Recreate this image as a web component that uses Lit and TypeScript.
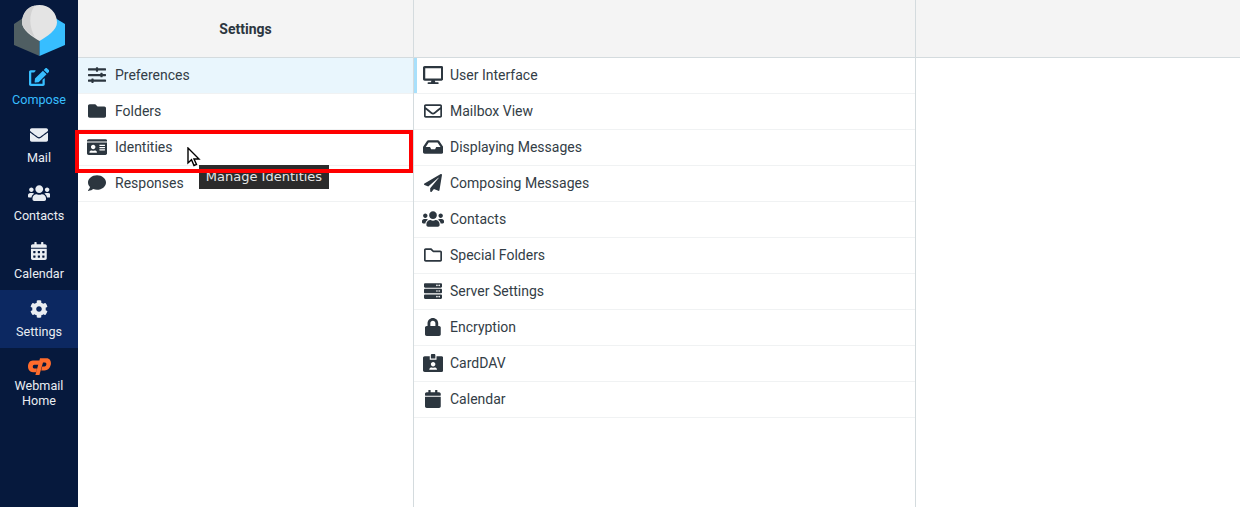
import { LitElement, html, css } from "lit";
import { customElement } from "lit/decorators.js";

type Ic = [string, string];
const I: Record<string, Ic> = {
  edit: ["0 0 576 512", "M402.6 83.2l90.2 90.2c3.8 3.8 3.8 10 0 13.8L274.4 405.6l-92.8 10.3c-12.4 1.4-22.9-9.1-21.5-21.5l10.3-92.8L388.8 83.2c3.8-3.8 10-3.8 13.8 0zm162-22.9l-48.8-48.8c-15.2-15.2-39.9-15.2-55.2 0l-35.4 35.4c-3.8 3.8-3.8 10 0 13.8l90.2 90.2c3.8 3.8 10 3.8 13.8 0l35.4-35.4c15.2-15.3 15.2-40 0-55.2zM384 346.2V448H64V128h73.1c3.2 0 6.2-1.3 8.5-3.5l40-40c7.6-7.6 2.2-20.5-8.5-20.5H48C21.5 64 0 85.5 0 112v352c0 26.5 21.5 48 48 48h352c26.5 0 48-21.5 48-48V306.2c0-10.7-12.9-16-20.5-8.5l-40 40c-2.2 2.3-3.5 5.3-3.5 8.5z"],
  envelope: ["0 0 512 512", "M502.3 190.8c3.9-3.1 9.7-.2 9.7 4.7V400c0 26.5-21.5 48-48 48H48c-26.5 0-48-21.5-48-48V195.6c0-5 5.7-7.8 9.7-4.7 22.4 17.4 52.1 39.5 154.1 113.6 21.1 15.4 56.7 47.8 92.2 47.6 35.7.3 72-32.8 92.3-47.6 102-74.1 131.6-96.3 154-113.7zM256 320c23.2.4 56.6-29.2 73.4-41.4 132.7-96.3 142.8-104.7 173.4-128.7 5.8-4.5 9.2-11.5 9.2-18.9v-19c0-26.5-21.5-48-48-48H48C21.5 64 0 85.5 0 112v19c0 7.4 3.4 14.3 9.2 18.9 30.6 23.9 40.7 32.4 173.4 128.7 16.8 12.2 50.2 41.8 73.4 41.4z"],
  users: ["0 0 640 512", "M96 224c35.3 0 64-28.7 64-64s-28.7-64-64-64-64 28.7-64 64 28.7 64 64 64zm448 0c35.3 0 64-28.7 64-64s-28.7-64-64-64-64 28.7-64 64 28.7 64 64 64zm32 32h-64c-17.6 0-33.5 7.1-45.1 18.6 40.3 22.1 68.9 62 75.1 109.4h66c17.7 0 32-14.3 32-32v-32c0-35.3-28.7-64-64-64zm-256 0c61.9 0 112-50.1 112-112S381.9 32 320 32 208 82.1 208 144s50.1 112 112 112zm76.8 32h-8.3c-20.8 10-43.9 16-68.5 16s-47.6-6-68.5-16h-8.3C179.6 288 128 339.6 128 403.2V432c0 26.5 21.5 48 48 48h288c26.5 0 48-21.5 48-48v-28.8c0-63.6-51.6-115.2-115.2-115.2zm-223.7-13.4C161.5 263.1 145.6 256 128 256H64c-35.3 0-64 28.7-64 64v32c0 17.7 14.3 32 32 32h65.9c6.3-47.4 34.9-87.3 75.2-109.4z"],
  calAlt: ["0 0 448 512", "M0 464c0 26.5 21.5 48 48 48h352c26.5 0 48-21.5 48-48V192H0v272zm320-196c0-6.6 5.4-12 12-12h40c6.6 0 12 5.4 12 12v40c0 6.6-5.4 12-12 12h-40c-6.6 0-12-5.4-12-12v-40zm0 128c0-6.6 5.4-12 12-12h40c6.6 0 12 5.4 12 12v40c0 6.6-5.4 12-12 12h-40c-6.6 0-12-5.4-12-12v-40zM192 268c0-6.6 5.4-12 12-12h40c6.6 0 12 5.4 12 12v40c0 6.6-5.4 12-12 12h-40c-6.6 0-12-5.4-12-12v-40zm0 128c0-6.6 5.4-12 12-12h40c6.6 0 12 5.4 12 12v40c0 6.6-5.4 12-12 12h-40c-6.6 0-12-5.4-12-12v-40zM64 268c0-6.6 5.4-12 12-12h40c6.6 0 12 5.4 12 12v40c0 6.6-5.4 12-12 12H76c-6.6 0-12-5.4-12-12v-40zm0 128c0-6.6 5.4-12 12-12h40c6.6 0 12 5.4 12 12v40c0 6.6-5.4 12-12 12H76c-6.6 0-12-5.4-12-12v-40zM400 64h-48V16c0-8.8-7.2-16-16-16h-32c-8.8 0-16 7.2-16 16v48H160V16c0-8.8-7.2-16-16-16h-32c-8.8 0-16 7.2-16 16v48H48C21.5 64 0 85.5 0 112v48h448v-48c0-26.5-21.5-48-48-48z"],
  cog: ["0 0 512 512", "M487.4 315.7l-42.6-24.6c4.3-23.2 4.3-47 0-70.2l42.6-24.6c4.9-2.8 7.1-8.6 5.5-14-11.1-35.6-30-67.8-54.7-94.6-3.8-4.1-10-5.1-14.8-2.3L380.8 110c-17.9-15.4-38.5-27.3-60.8-35.1V25.8c0-5.6-3.9-10.5-9.4-11.7-36.7-8.2-74.3-7.8-109.2 0-5.5 1.2-9.4 6.1-9.4 11.7V75c-22.2 7.9-42.8 19.8-60.8 35.1L88.7 85.5c-4.9-2.8-11-1.9-14.8 2.3-24.7 26.7-43.6 58.9-54.7 94.6-1.7 5.4.6 11.2 5.5 14L67.3 221c-4.3 23.2-4.3 47 0 70.2l-42.6 24.6c-4.9 2.8-7.1 8.6-5.5 14 11.1 35.6 30 67.8 54.7 94.6 3.8 4.1 10 5.1 14.8 2.3l42.6-24.6c17.9 15.4 38.5 27.3 60.8 35.1v49.2c0 5.6 3.9 10.5 9.4 11.7 36.7 8.2 74.3 7.8 109.2 0 5.5-1.2 9.4-6.1 9.4-11.7v-49.2c22.2-7.9 42.8-19.8 60.8-35.1l42.6 24.6c4.9 2.8 11 1.9 14.8-2.3 24.7-26.7 43.6-58.9 54.7-94.6 1.5-5.5-.7-11.3-5.6-14.1zM256 336c-44.1 0-80-35.9-80-80s35.9-80 80-80 80 35.9 80 80-35.9 80-80 80z"],
  cpanel: ["0 0 23 17", "M11.4 2.6 L4.8 2.6 C1.8 2.6 0 5.4 0 8.6 C0 12 2 14.2 5 14.2 L8 14.2 L9 10.4 L6.2 10.4 C4.2 10.4 4.4 6.8 6.4 6.8 L10.2 6.8 Z M12 0.2 L18.6 0.2 C22 0.2 23.6 3.6 22.7 7 C21.9 10.2 19.6 12.4 16.6 12.4 L13.2 12.4 L14.2 8.6 L16.4 8.6 C18.6 8.6 19.2 4.4 17 4.4 L15 4.4 L11.4 17 L7.4 17 Z"],
  sliders: ["0 0 512 512", "M496 384H160v-16c0-8.8-7.2-16-16-16h-32c-8.8 0-16 7.2-16 16v16H16c-8.8 0-16 7.2-16 16v32c0 8.8 7.2 16 16 16h80v16c0 8.8 7.2 16 16 16h32c8.8 0 16-7.2 16-16v-16h336c8.8 0 16-7.2 16-16v-32c0-8.8-7.2-16-16-16zm0-160h-80v-16c0-8.8-7.2-16-16-16h-32c-8.8 0-16 7.2-16 16v16H16c-8.8 0-16 7.2-16 16v32c0 8.8 7.2 16 16 16h336v16c0 8.8 7.2 16 16 16h32c8.8 0 16-7.2 16-16v-16h80c8.8 0 16-7.2 16-16v-32c0-8.8-7.2-16-16-16zm0-160H288V48c0-8.8-7.2-16-16-16h-32c-8.8 0-16 7.2-16 16v16H16C7.2 64 0 71.2 0 80v32c0 8.8 7.2 16 16 16h208v16c0 8.8 7.2 16 16 16h32c8.8 0 16-7.2 16-16v-16h208c8.8 0 16-7.2 16-16V80c0-8.8-7.2-16-16-16z"],
  folder: ["0 0 512 512", "M464 128H272l-64-64H48C21.49 64 0 85.49 0 112v288c0 26.51 21.49 48 48 48h416c26.51 0 48-21.49 48-48V176c0-26.51-21.49-48-48-48z"],
  idCard: ["0 0 576 512", "M528 32H48C21.5 32 0 53.5 0 80v16h576V80c0-26.5-21.5-48-48-48zM0 432c0 26.5 21.5 48 48 48h480c26.5 0 48-21.5 48-48V128H0v304zm352-232c0-4.4 3.6-8 8-8h144c4.4 0 8 3.6 8 8v16c0 4.4-3.6 8-8 8H360c-4.4 0-8-3.6-8-8v-16zm0 64c0-4.4 3.6-8 8-8h144c4.4 0 8 3.6 8 8v16c0 4.4-3.6 8-8 8H360c-4.4 0-8-3.6-8-8v-16zm0 64c0-4.4 3.6-8 8-8h144c4.4 0 8 3.6 8 8v16c0 4.4-3.6 8-8 8H360c-4.4 0-8-3.6-8-8v-16zM176 192c35.3 0 64 28.7 64 64s-28.7 64-64 64-64-28.7-64-64 28.7-64 64-64zM67.1 396.2C75.5 370.5 99.6 352 128 352h8.2c12.3 5.1 25.7 8 39.8 8s27.6-2.9 39.8-8h8.2c28.4 0 52.5 18.5 60.9 44.2 3.2 9.9-5.2 19.8-15.6 19.8H82.7c-10.4 0-18.8-10-15.6-19.8z"],
  comment: ["0 0 512 512", "M256 32C114.6 32 0 125.1 0 240c0 49.6 21.4 95 57 130.7C44.5 421.1 2.7 466 2.2 466.5c-2.2 2.3-2.8 5.7-1.5 8.7S4.8 480 8 480c66.3 0 116-31.8 140.6-51.4 32.7 12.3 69 19.4 107.4 19.4 141.4 0 256-93.1 256-208S397.4 32 256 32z"],
  desktop: ["0 0 576 512", "M528 0H48C21.5 0 0 21.5 0 48v320c0 26.5 21.5 48 48 48h192l-16 48h-72c-13.3 0-24 10.7-24 24s10.7 24 24 24h272c13.3 0 24-10.7 24-24s-10.7-24-24-24h-72l-16-48h192c26.5 0 48-21.5 48-48V48c0-26.5-21.5-48-48-48zm-16 352H64V64h448v288z"],
  envReg: ["0 0 512 512", "M464 64H48C21.49 64 0 85.49 0 112v288c0 26.51 21.49 48 48 48h416c26.51 0 48-21.49 48-48V112c0-26.51-21.49-48-48-48zm0 48v40.805c-22.422 18.259-58.168 46.651-134.587 106.49-16.841 13.247-50.201 45.072-73.413 44.701-23.208.375-56.579-31.459-73.413-44.701C106.18 199.465 70.425 171.067 48 152.805V112h416zM48 400V214.398c22.914 18.251 55.409 43.862 104.938 82.646 21.857 17.205 60.134 55.186 103.062 54.955 42.717.231 80.509-37.199 103.053-54.947 49.528-38.783 82.032-64.401 104.947-82.653V400H48z"],
  inbox: ["0 0 576 512", "M567.938 243.908L462.25 85.374A48.003 48.003 0 0 0 422.311 64H153.689a48 48 0 0 0-39.938 21.374L8.062 243.908A47.994 47.994 0 0 0 0 270.533V400c0 26.51 21.49 48 48 48h480c26.51 0 48-21.49 48-48V270.533a47.994 47.994 0 0 0-8.062-26.625zM162.252 128h251.497l85.333 128H376l-32 64H232l-32-64H76.918l85.334-128z"],
  plane: ["0 0 512 512", "M476 3.2L12.5 270.6c-18.1 10.4-15.8 35.6 2.2 43.2L121 358.4l287.3-253.2c5.5-4.9 13.3 2.6 8.6 8.3L176 407v80.5c0 23.6 28.5 32.9 42.5 15.8L282 426l124.6 52.2c14.2 6 30.4-2.9 33-18.2l72-432C515 7.8 493.3-6.8 476 3.2z"],
  folderReg: ["0 0 512 512", "M464 128H272l-54.63-54.63c-6-6-14.14-9.37-22.63-9.37H48C21.49 64 0 85.49 0 112v288c0 26.51 21.49 48 48 48h416c26.51 0 48-21.49 48-48V176c0-26.51-21.49-48-48-48zm0 272H48V112h140.12l54.63 54.63c6 6 14.14 9.37 22.63 9.37H464v224z"],
  server: ["0 0 512 512", "M480 160H32c-17.673 0-32-14.327-32-32V64c0-17.673 14.327-32 32-32h448c17.673 0 32 14.327 32 32v64c0 17.673-14.327 32-32 32zm-48-88c-13.255 0-24 10.745-24 24s10.745 24 24 24 24-10.745 24-24-10.745-24-24-24zm-64 0c-13.255 0-24 10.745-24 24s10.745 24 24 24 24-10.745 24-24-10.745-24-24-24zm112 248H32c-17.673 0-32-14.327-32-32v-64c0-17.673 14.327-32 32-32h448c17.673 0 32 14.327 32 32v64c0 17.673-14.327 32-32 32zm-48-88c-13.255 0-24 10.745-24 24s10.745 24 24 24 24-10.745 24-24-10.745-24-24-24zm-64 0c-13.255 0-24 10.745-24 24s10.745 24 24 24 24-10.745 24-24-10.745-24-24-24zm112 248H32c-17.673 0-32-14.327-32-32v-64c0-17.673 14.327-32 32-32h448c17.673 0 32 14.327 32 32v64c0 17.673-14.327 32-32 32zm-48-88c-13.255 0-24 10.745-24 24s10.745 24 24 24 24-10.745 24-24-10.745-24-24-24zm-64 0c-13.255 0-24 10.745-24 24s10.745 24 24 24 24-10.745 24-24-10.745-24-24-24z"],
  lock: ["0 0 448 512", "M400 224h-24v-72C376 68.2 307.8 0 224 0S72 68.2 72 152v72H48c-26.5 0-48 21.5-48 48v192c0 26.5 21.5 48 48 48h352c26.5 0 48-21.5 48-48V272c0-26.5-21.5-48-48-48zm-104 0H152v-72c0-39.7 32.3-72 72-72s72 32.3 72 72v72z"],
  idAlt: ["0 0 576 512", "M528 64H384v96H192V64H48C21.5 64 0 85.5 0 112v352c0 26.5 21.5 48 48 48h480c26.5 0 48-21.5 48-48V112c0-26.5-21.5-48-48-48zM288 224c35.3 0 64 28.7 64 64s-28.7 64-64 64-64-28.7-64-64 28.7-64 64-64zm93.3 224H194.7c-10.4 0-18.8-10-15.6-19.8 8.3-25.6 32.4-44.2 60.9-44.2h8.2c12.3 5.1 25.7 8 39.8 8s27.6-2.9 39.8-8h8.2c28.4 0 52.5 18.5 60.9 44.2 3.2 9.8-5.2 19.8-15.6 19.8zM352 32c0-17.7-14.3-32-32-32h-64c-17.7 0-32 14.3-32 32v96h128V32z"],
  calendar: ["0 0 448 512", "M12 192h424c6.6 0 12 5.4 12 12v260c0 26.5-21.5 48-48 48H48c-26.5 0-48-21.5-48-48V204c0-6.6 5.4-12 12-12zm436-44v-36c0-26.5-21.5-48-48-48h-48V12c0-6.6-5.4-12-12-12h-40c-6.6 0-12 5.4-12 12v52H160V12c0-6.6-5.4-12-12-12h-40c-6.6 0-12 5.4-12 12v52H48C21.5 64 0 85.5 0 112v36c0 6.6 5.4 12 12 12h424c6.6 0 12-5.4 12-12z"],
};

const icon = (k: string) => {
  const [vb, d] = I[k];
  const p = vb.split(" ");
  return html`<svg class="ic" viewBox=${vb} style="aspect-ratio:${p[2]}/${p[3]}" fill="currentColor"><path d=${d}></path></svg>`;
};

const nav: [string, string, string][] = [
  ["edit", "Compose", "compose"],
  ["envelope", "Mail", ""],
  ["users", "Contacts", ""],
  ["calAlt", "Calendar", ""],
  ["cog", "Settings", "active"],
  ["cpanel", "Webmail Home", "cp"],
];
const left: [string, string][] = [
  ["sliders", "Preferences"],
  ["folder", "Folders"],
  ["idCard", "Identities"],
  ["comment", "Responses"],
];
const mid: [string, string][] = [
  ["desktop", "User Interface"],
  ["envReg", "Mailbox View"],
  ["inbox", "Displaying Messages"],
  ["plane", "Composing Messages"],
  ["users", "Contacts"],
  ["folderReg", "Special Folders"],
  ["server", "Server Settings"],
  ["lock", "Encryption"],
  ["idAlt", "CardDAV"],
  ["calendar", "Calendar"],
];

@customElement("app-root")
export class AppRoot extends LitElement {
  static styles = css`
    :host { display: block; width: 1240px; height: 507px; overflow: hidden; position: relative; background: #fff;
      font-family: Roboto, "Liberation Sans", sans-serif; font-size: 14px; color: #2c363f; }
    .app { display: flex; height: 507px; }
    .side { width: 78px; flex: none; background: #06193d; display: flex; flex-direction: column; }
    .logo { height: 58px; display: block; flex: none; }
    .nav { height: 58px; flex: none; display: flex; flex-direction: column; align-items: center; color: #e9edf2; font-size: 12.6px; line-height: 15px; text-align: center; box-sizing: border-box; padding-top: 10px; }
    .nav .ic { height: 18px; margin-bottom: 6px; display: block; }
    .nav.compose { color: #37beff; }
    .nav.active { background: #0c2861; }
    .nav.cp { height: 70px; }
    .nav.cp .ic { color: #ff6c2c; height: 17px; margin-bottom: 4px; }
    .nav.cp .lbl { width: 60px; line-height: 14.5px; }
    .col { display: flex; flex-direction: column; box-sizing: border-box; border-right: 1px solid #d4dbde; }
    .c1 { width: 336px; }
    .c2 { width: 502px; }
    .c3 { flex: 1; border-right: 0; }
    .head { height: 58px; flex: none; box-sizing: border-box; background: #f4f4f4; border-bottom: 1px solid #d4dbde; display: flex; align-items: center; justify-content: center; font-weight: 700; padding-top: 1px; }
    .row { height: 36px; flex: none; box-sizing: border-box; border-bottom: 1px solid #f0f2f3; display: flex; align-items: center; padding: 0 0 2px 8px; gap: 7px; }
    .c2 .row { gap: 6px; }
    .box { width: 22px; display: flex; justify-content: center; flex: none; }
    .row .ic { height: 18px; display: block; }
    .txt { color: #333d46; }
    .row.sel { background: #e9f6fd; }
    .c2 .row.sel { background: #fff; box-shadow: inset 3px 0 0 #a9e0fb; }
    .mark { position: absolute; left: 75px; top: 130px; width: 338px; height: 43px; box-sizing: border-box; border: 4px solid #ff0000; }
    .tip { position: absolute; left: 199px; top: 165px; width: 130px; height: 24px; box-sizing: border-box; background: #2b2b2b; color: #e6e6e6; font-family: "DejaVu Sans", sans-serif; font-size: 13px; line-height: 24px; text-align: center; }
    .cursor { position: absolute; left: 187px; top: 147px; width: 14px; height: 21px; }
  `;

  render() {
    const rows = (items: [string, string][]) =>
      items.map(([k, t], i) => html`<div class="row ${i === 0 ? "sel" : ""}"><span class="box">${icon(k)}</span><span class="txt">${t}</span></div>`);
    return html`
      <div class="app">
        <aside class="side">
          <svg class="logo" viewBox="0 0 78 58" width="78" height="58">
            <polygon points="14,24 23,18 39.5,18 39.5,56 14,45" fill="#4f5e62"></polygon>
            <polygon points="65,24 55,18 39.5,18 39.5,56 65,45" fill="#37beff"></polygon>
            <path d="M22 22.5 A17.5 17.5 0 1 1 57 22.5 C57 30 47 36.5 39.5 41 C32 36.5 22 30 22 22.5Z" fill="#e4e4e4"></path>
            <path d="M35 5.6 C26 7 22 15 22 22.5 C22 28 29 33.5 35 37.2 C29 27 28.5 14 35 5.6Z" fill="#d2d2d2"></path>
          </svg>
          ${nav.map(([k, t, c]) => html`<div class="nav ${c}">${icon(k)}<span class="lbl">${t}</span></div>`)}
        </aside>
        <section class="col c1"><div class="head">Settings</div>${rows(left)}</section>
        <section class="col c2"><div class="head"></div>${rows(mid)}</section>
        <section class="col c3"><div class="head"></div></section>
      </div>
      <div class="tip">Manage Identities</div>
      <div class="mark"></div>
      <svg class="cursor" viewBox="0 0 14 21">
        <path d="M1 1 L1 16 L4.5 12.8 L7 18.5 L9.5 17.4 L7 12 L12 12 Z" fill="#fff" stroke="#000" stroke-width="1.4"></path>
      </svg>
    `;
  }
}
